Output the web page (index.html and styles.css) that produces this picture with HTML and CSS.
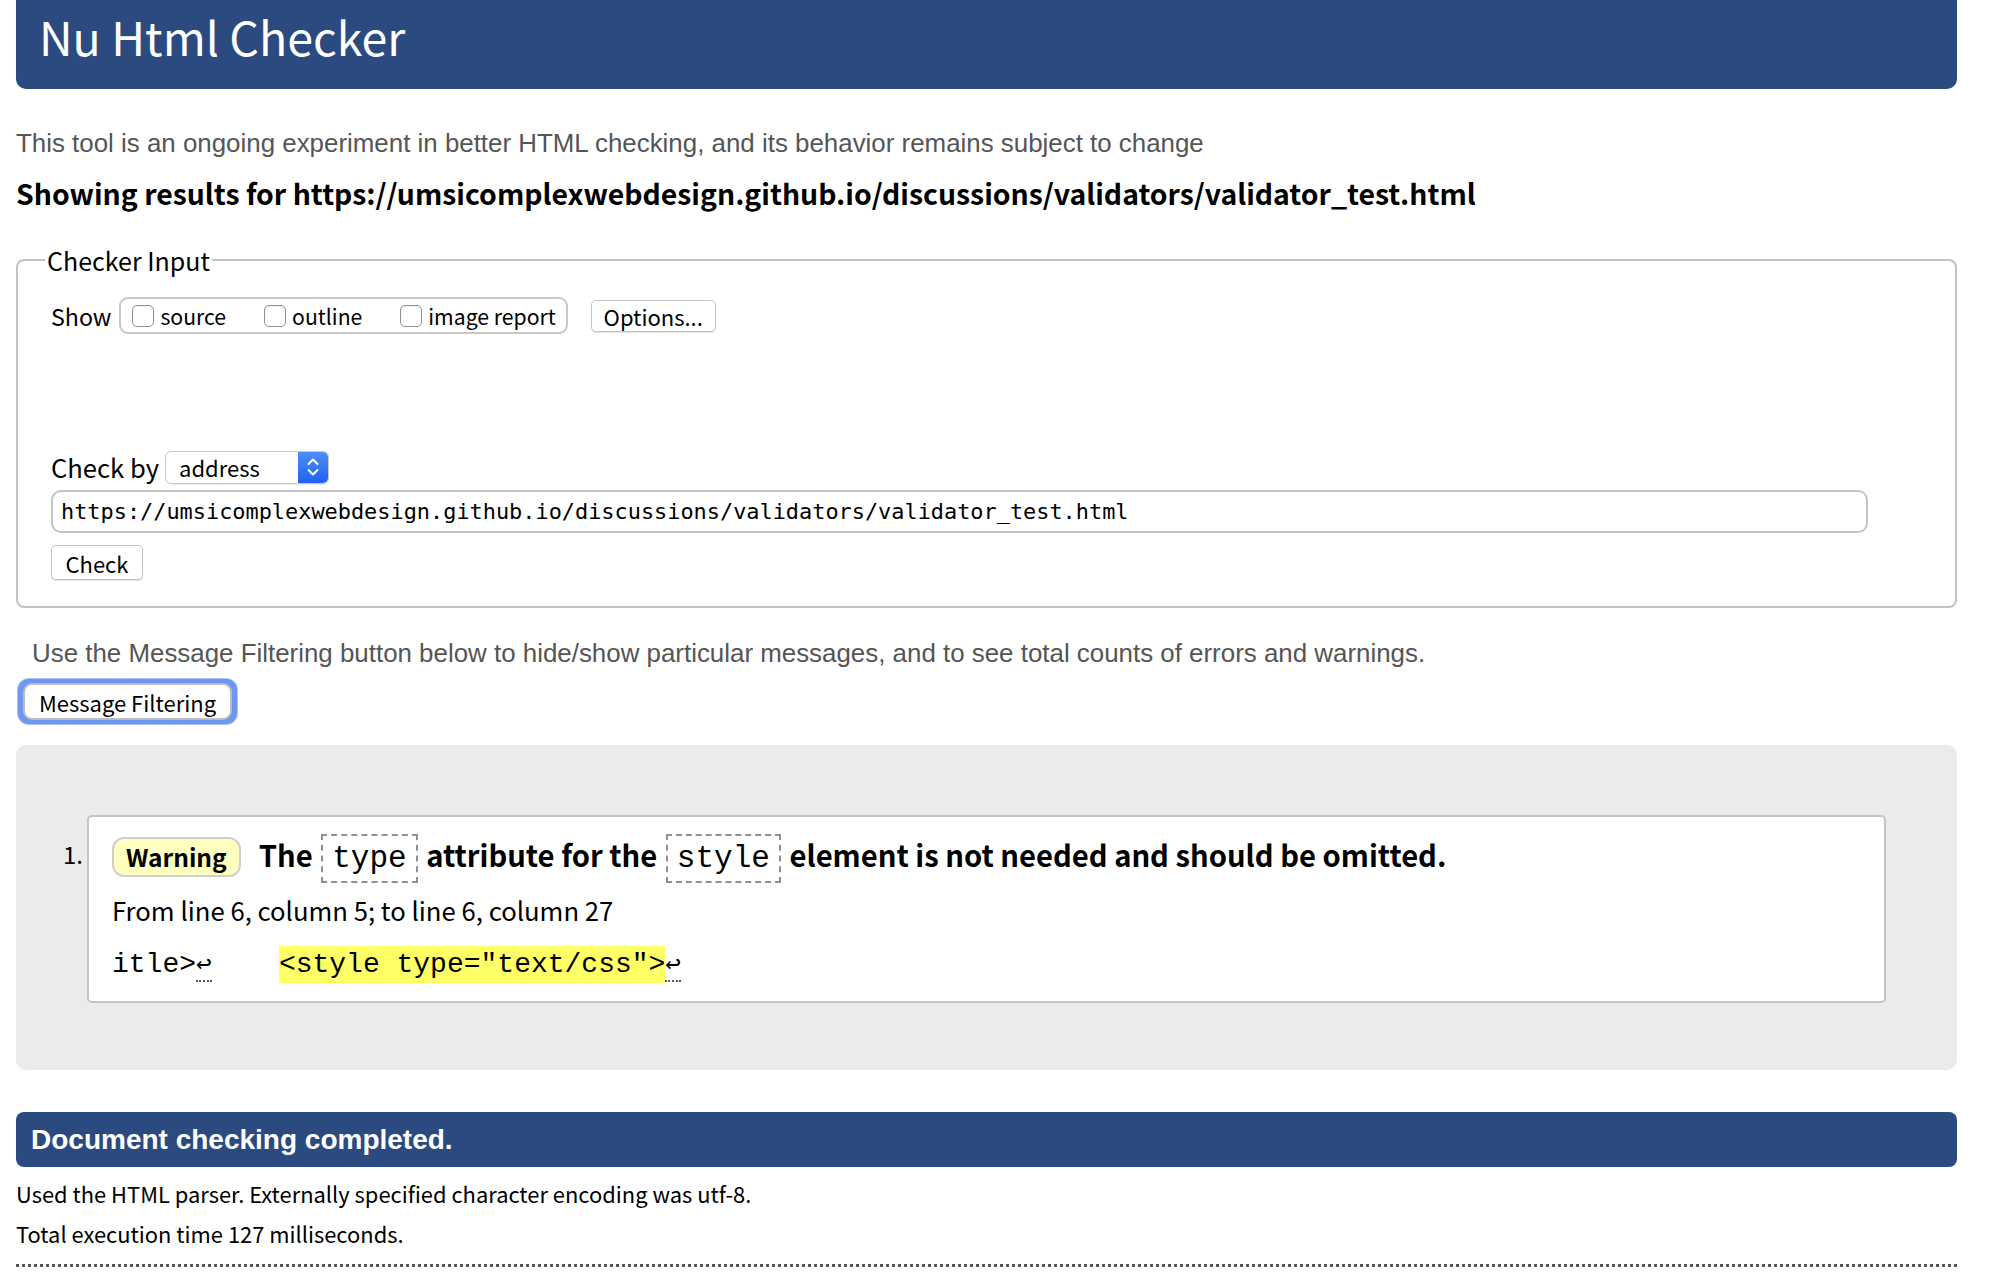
FILE: index.html
```html
<!DOCTYPE html>
<html lang="en">
<head>
<meta charset="utf-8">
<title>Showing results for https://umsicomplexwebdesign.github.io/discussions/validators/validator_test.html - Nu Html Checker</title>
<link rel="stylesheet" href="styles.css">
</head>
<body>
<div class="page">
  <header class="masthead"><h1 class="masthead-title">Nu Html Checker</h1></header>

  <p class="intro">This tool is an ongoing experiment in better HTML checking, and its behavior remains subject to change</p>
  <p class="results-for">Showing results for https://umsicomplexwebdesign.github.io/discussions/validators/validator_test.html</p>

  <fieldset class="checker">
    <legend class="checker-legend">Checker Input</legend>
    <div class="show-row">
      <span class="row-label row-label-show">Show</span>
      <div class="show-box">
        <label class="opt"><span class="box"></span>source</label>
        <label class="opt"><span class="box"></span>outline</label>
        <label class="opt"><span class="box"></span>image report</label>
      </div>
      <span class="btn btn-options">Options...</span>
    </div>
    <div class="checkby-row">
      <span class="row-label">Check by</span>
      <div class="select">
        <span class="select-text">address</span>
        <span class="select-arrows">
          <svg width="14" height="22" viewBox="0 0 14 22"><path d="M2.5 8 L7 3.5 L11.5 8" fill="none" stroke="#fff" stroke-width="2" stroke-linecap="round" stroke-linejoin="round"/><path d="M2.5 14 L7 18.5 L11.5 14" fill="none" stroke="#fff" stroke-width="2" stroke-linecap="round" stroke-linejoin="round"/></svg>
        </span>
      </div>
    </div>
    <div class="url-input">https://umsicomplexwebdesign.github.io/discussions/validators/validator_test.html</div>
    <span class="btn btn-check">Check</span>
  </fieldset>

  <p class="filter-note">Use the Message Filtering button below to hide/show particular messages, and to see total counts of errors and warnings.</p>
  <div class="filter-ring"><span class="btn btn-filter">Message Filtering</span></div>

  <div class="results">
    <ol class="messages">
      <li class="message">
        <span class="num">1.</span>
        <div class="message-body">
          <p class="message-head"><span class="badge">Warning</span><span class="head-text">The <code class="code">type</code> attribute for the <code class="code">style</code> element is not needed and should be omitted.</span></p>
          <p class="location">From line 6, column 5; to line 6, column 27</p>
          <p class="extract">itle&gt;<span class="lf">↩</span>    <mark class="hl">&lt;style type="text/css"&gt;</mark><span class="lf">↩</span></p>
        </div>
      </li>
    </ol>
  </div>

  <div class="completed">Document checking completed.</div>
  <p class="details">Used the HTML parser. Externally specified character encoding was utf-8.</p>
  <p class="details">Total execution time 127 milliseconds.</p>
  <div class="dotted"></div>
</div>
</body>
</html>
```

FILE: styles.css
```css
html, body {
  margin: 0;
  padding: 0;
  background: #fff;
}

body {
  font-family: "Noto Sans CJK KR", "Noto Sans", sans-serif;
  color: #000;
}

.page {
  width: 1941px;
  margin-left: 16px;
}

.masthead {
  background: #2b4a80;
  height: 89px;
  border-radius: 0 0 10px 10px;
  display: flex;
  align-items: center;
  padding-left: 23px;
}

.masthead-title {
  margin: 0;
  color: #fff;
  font-weight: 400;
  font-size: 46.5px;
  line-height: 60px;
  margin-top: -17px;
}

.intro {
  margin: 38px 0 0;
  font-family: "Liberation Sans", Arial, sans-serif;
  font-size: 25.9px;
  line-height: 32px;
  color: #555;
}

.results-for {
  margin: 16px 0 0;
  font-weight: 700;
  font-size: 28.4px;
  line-height: 36px;
}

.checker {
  margin: 32px 0 0;
  border: 2px solid #c2c2c2;
  border-radius: 8px;
  padding: 0 0 26px 33px;
  min-width: 0;
}

.checker-legend {
  font-size: 25px;
  line-height: 34px;
  padding: 0 2px;
  margin-left: -6px;
}

.show-row {
  display: flex;
  align-items: center;
  margin-top: 20px;
}

.row-label {
  font-size: 25.6px;
  line-height: 34px;
}

.row-label-show {
  font-size: 23.2px;
}

.show-box {
  display: flex;
  align-items: center;
  height: 37px;
  box-sizing: border-box;
  border: 2px solid #c7c7c7;
  border-radius: 9px;
  margin-left: 8px;
  padding: 0 10px 0 11px;
}

.opt {
  display: flex;
  align-items: center;
  font-size: 21.2px;
  line-height: 28px;
  margin-right: 38px;
}

.opt:last-child {
  margin-right: 0;
}

.box {
  width: 22px;
  height: 22px;
  box-sizing: border-box;
  border: 1px solid #8f8f8f;
  border-radius: 5px;
  margin-right: 6px;
  box-shadow: inset 0 1px 1px rgba(0,0,0,0.06);
  background: #fff;
}

.btn {
  display: inline-flex;
  align-items: center;
  justify-content: center;
  border: 1px solid #c4c4c4;
  border-radius: 5px;
  background: #fff;
  box-shadow: 0 1px 1px rgba(0,0,0,0.12);
  font-size: 22px;
  line-height: 28px;
  color: #000;
}

.btn-options {
  margin-left: 23px;
  height: 32px;
  padding: 0 12px;
  box-sizing: border-box;
  width: 125px;
}

.checkby-row {
  display: flex;
  align-items: center;
  margin-top: 116px;
}

.select {
  display: flex;
  margin-left: 6px;
  height: 33px;
  width: 164px;
  box-sizing: border-box;
  border: 1px solid #c8c8c8;
  border-radius: 6px;
  overflow: hidden;
  box-shadow: 0 1px 1px rgba(0,0,0,0.08);
}

.select-text {
  flex: 1;
  font-size: 22px;
  line-height: 31px;
  padding-left: 13px;
}

.select-arrows {
  width: 30px;
  display: flex;
  align-items: center;
  justify-content: center;
  background: linear-gradient(#4b8ff8, #1f62f2);
}

.url-input {
  margin-top: 6px;
  width: 1817px;
  height: 43px;
  box-sizing: border-box;
  border: 2px solid #c4c4c4;
  border-radius: 10px;
  font-family: "DejaVu Sans Mono", monospace;
  font-size: 21.9px;
  line-height: 39px;
  padding-left: 8px;
}

.btn-check {
  margin-top: 12px;
  height: 35px;
  width: 92px;
  box-sizing: border-box;
}

.filter-note {
  margin: 29px 0 0 16px;
  font-family: "Liberation Sans", Arial, sans-serif;
  font-size: 25.9px;
  line-height: 32px;
  color: #555;
}

.filter-ring {
  display: inline-block;
  margin: 10px 0 0 2px;
  padding: 4px 5px;
  border-radius: 11px;
  background: #6e98f0;
  box-shadow: 0 0 0 1px #a9c1f5;
}

.btn-filter {
  width: 209px;
  height: 37px;
  box-sizing: border-box;
  border: 2px solid #bdbdbd;
  border-radius: 9px;
  box-shadow: none;
  font-size: 22px;
}

.results {
  margin-top: 21px;
  background: #ebebeb;
  border-radius: 10px;
  padding: 70px 71px 67px 71px;
}

.messages {
  list-style: none;
  margin: 0;
  padding: 0;
}

.message {
  display: flex;
  position: relative;
  background: #fff;
  border: 2px solid #c4c4c4;
  border-radius: 5px;
  padding: 12px 0 19px 23px;
}

.num {
  position: absolute;
  left: -26px;
  top: 21px;
  font-size: 24px;
  line-height: 32px;
}

.message-body {
  flex: 1;
}

.message-head {
  margin: 0;
  font-weight: 700;
  font-size: 29.2px;
  line-height: 50px;
  display: flex;
  align-items: center;
}

.badge {
  display: inline-block;
  background: #ffffc0;
  border: 2px solid #cfcfcf;
  border-radius: 12px;
  font-size: 24.5px;
  line-height: 36px;
  padding: 0 12px;
  margin-right: 18px;
}

.code {
  font-family: "Liberation Mono", "Courier New", monospace;
  font-weight: 400;
  font-size: 31px;
  border: 2px dashed #909090;
  padding: 5px 9px;
  margin: 0 2px;
}

.location {
  margin: 9px 0 0;
  font-size: 25.7px;
  line-height: 34px;
}

.extract {
  margin: 21px 0 0;
  font-family: "Liberation Mono", "Courier New", monospace;
  font-size: 28px;
  line-height: 34px;
  white-space: pre;
}

.lf {
  font-size: 26px;
  border-bottom: 2px dotted #555;
}

.hl {
  background: #ffff66;
  color: #000;
  padding: 3px 0;
}

.completed {
  margin-top: 42px;
  background: #2b4a80;
  color: #fff;
  height: 55px;
  border-radius: 8px;
  font-family: "Liberation Sans", Arial, sans-serif;
  font-weight: 700;
  font-size: 28px;
  line-height: 55px;
  padding-left: 15px;
}

.details {
  margin: 12px 0 0;
  font-size: 21.9px;
  line-height: 30px;
}

.details + .details {
  margin-top: 10px;
}

.dotted {
  margin-top: 15px;
  border-top: 3px dotted #555;
}
```
